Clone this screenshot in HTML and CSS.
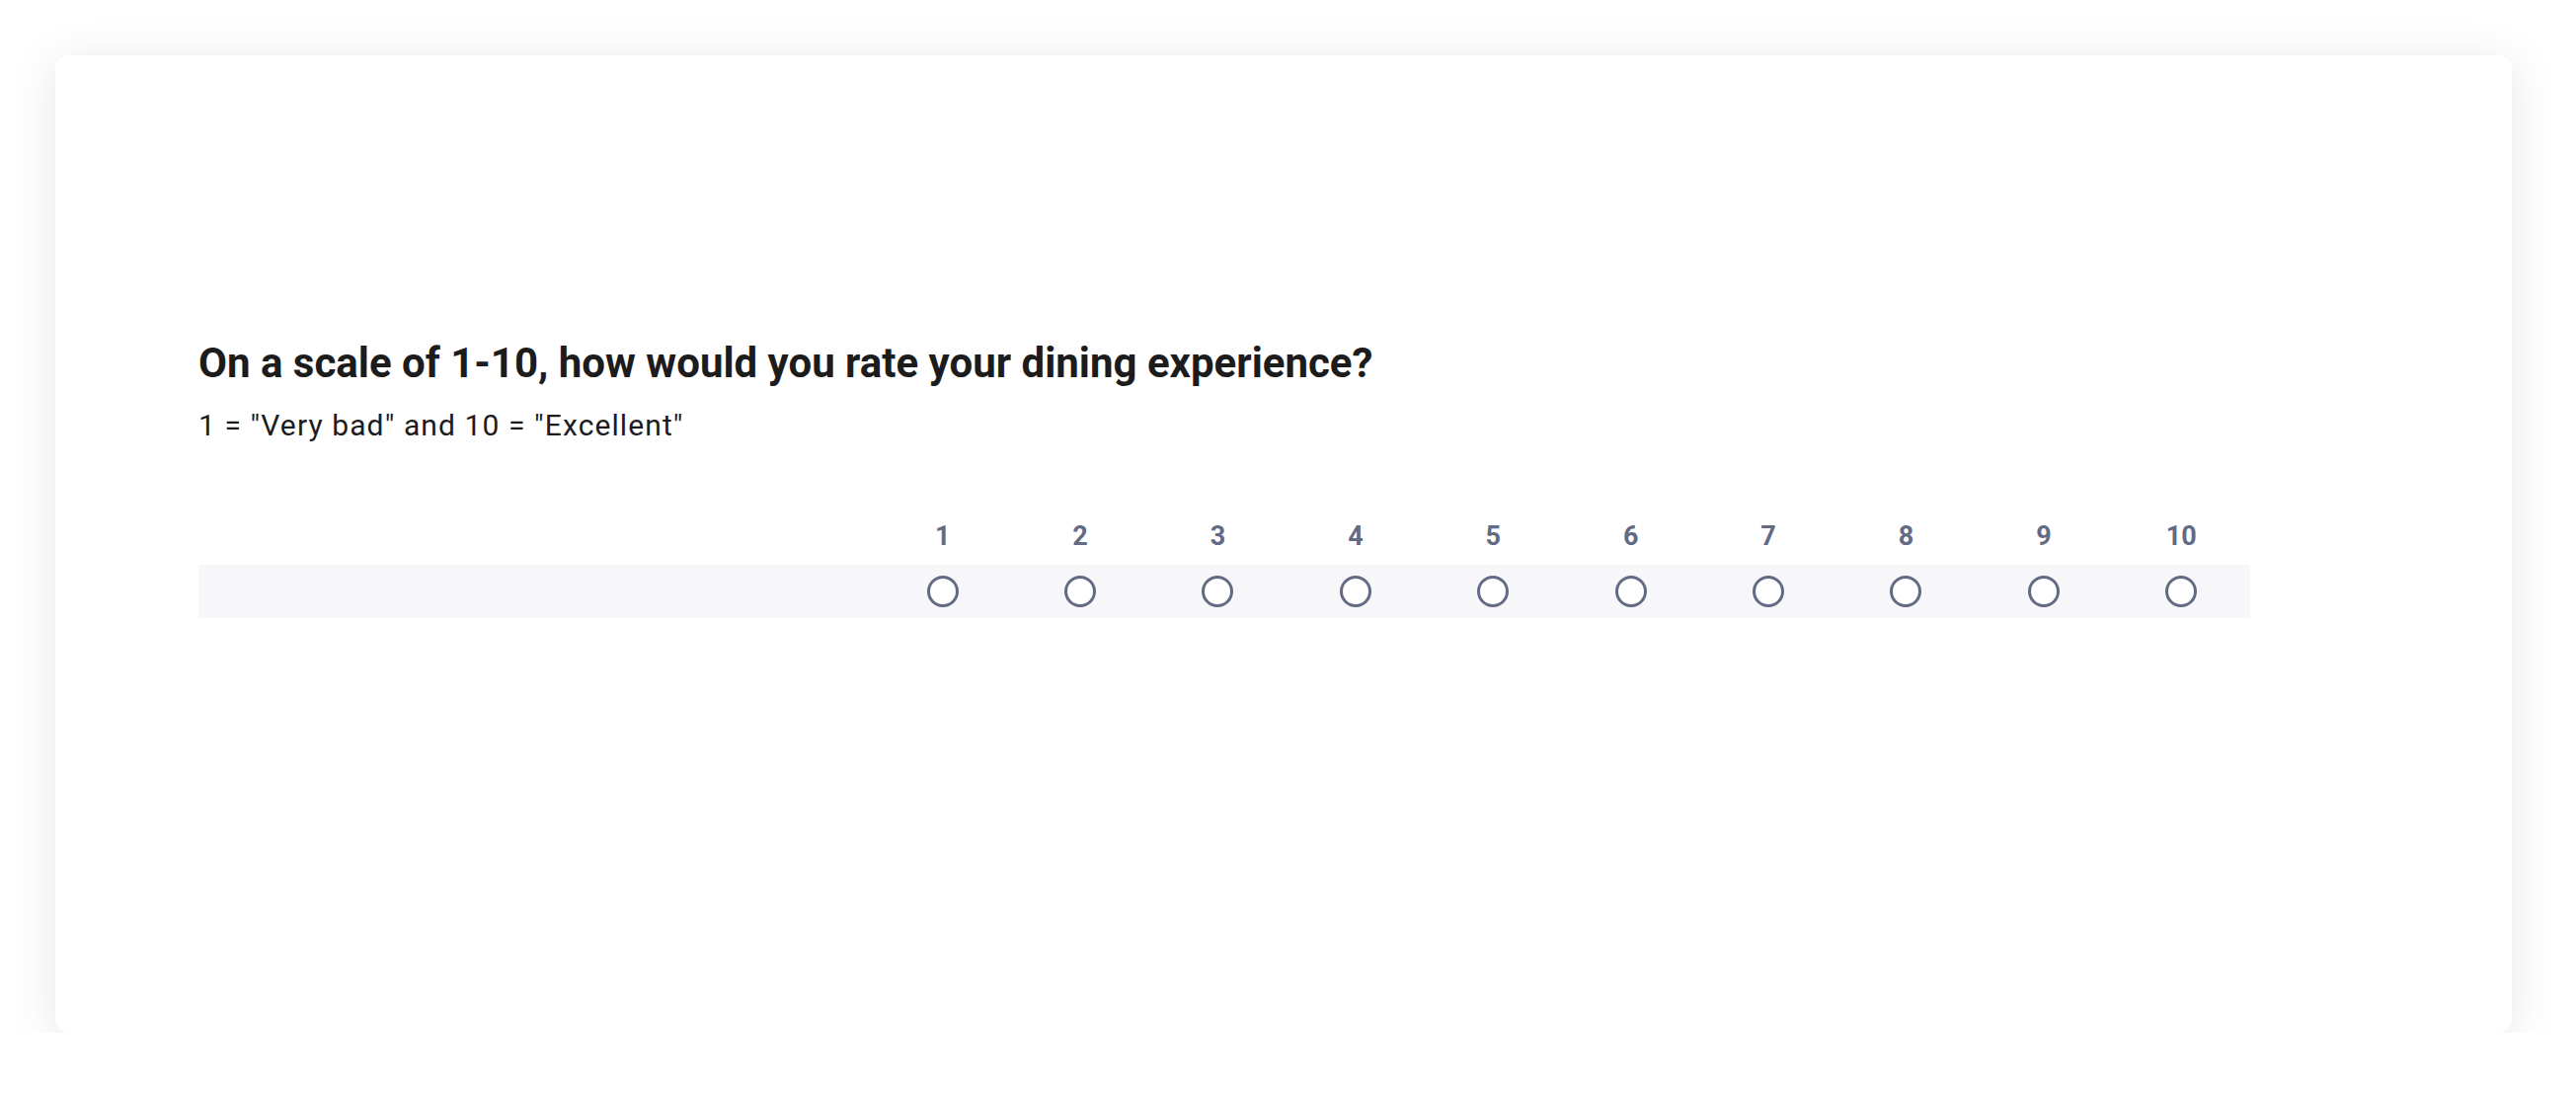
FILE: index.html
```html
<!DOCTYPE html>
<html lang="en">
<head>
<meta charset="utf-8">
<title>Survey</title>
<link rel="stylesheet" href="styles.css">
</head>
<body>
<div class="card">
  <div class="question">
    <h1 class="title">On a scale of 1-10, how would you rate your dining experience?</h1>
    <p class="subtitle">1 = "Very bad" and 10 = "Excellent"</p>
    <div class="matrix">
      <div class="head">
        <div class="label-cell"></div>
        <div class="num">1</div><div class="num">2</div><div class="num">3</div><div class="num">4</div><div class="num">5</div>
        <div class="num">6</div><div class="num">7</div><div class="num">8</div><div class="num">9</div><div class="num">10</div>
      </div>
      <div class="row">
        <div class="label-cell"></div>
        <div class="cell"><span class="radio"></span></div>
        <div class="cell"><span class="radio"></span></div>
        <div class="cell"><span class="radio"></span></div>
        <div class="cell"><span class="radio"></span></div>
        <div class="cell"><span class="radio"></span></div>
        <div class="cell"><span class="radio"></span></div>
        <div class="cell"><span class="radio"></span></div>
        <div class="cell"><span class="radio"></span></div>
        <div class="cell"><span class="radio"></span></div>
        <div class="cell"><span class="radio"></span></div>
      </div>
    </div>
  </div>
</div>
</body>
</html>
```

FILE: styles.css
```css
html, body {
  margin: 0;
  padding: 0;
  background: #ffffff;
}
body {
  padding: 56px 0 0 56px;
  font-family: Roboto, "Liberation Sans", sans-serif;
  color: #1c1c1c;
}
.card {
  width: 2488px;
  height: 990px;
  box-sizing: border-box;
  background: #ffffff;
  border-radius: 14px;
  box-shadow: 0 6px 48px rgba(0, 0, 0, 0.10);
  padding: 287px 0 0 145px;
}
.question {
  width: 2078px;
}
.title {
  margin: 0;
  font-size: 42px;
  line-height: 50px;
  font-weight: 700;
  letter-spacing: 0;
  color: #1c1c1c;
}
.subtitle {
  margin: 20px 0 0 0;
  font-size: 30px;
  line-height: 36px;
  font-weight: 400;
  letter-spacing: 1.1px;
  color: #1c1c1c;
}
.matrix {
  margin-top: 75px;
}
.head, .row {
  display: grid;
  grid-template-columns: 684px repeat(10, 1fr);
  align-items: center;
}
.head {
  height: 38px;
  margin-bottom: 10px;
}
.num {
  text-align: center;
  font-size: 27px;
  line-height: 38px;
  font-weight: 700;
  color: #636a84;
}
.row {
  height: 54px;
  background: #f7f7f9;
}
.cell {
  display: flex;
  justify-content: center;
  align-items: center;
}
.radio {
  display: block;
  width: 32px;
  height: 32px;
  box-sizing: border-box;
  border: 3px solid #636a84;
  border-radius: 50%;
  background: #ffffff;
}
```
